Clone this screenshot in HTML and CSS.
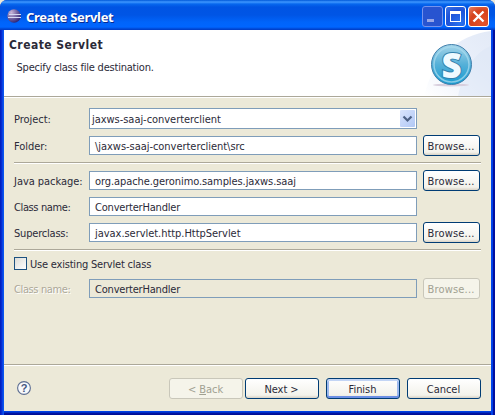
FILE: index.html
```html
<!DOCTYPE html>
<html lang="en">
<head>
<meta charset="utf-8">
<title>Create Servlet</title>
<link rel="stylesheet" href="styles.css">
</head>
<body>
<div class="window">
  <div class="titlebar">
    <svg class="app-icon" width="14" height="14" viewBox="0 0 14 14">
      <defs><radialGradient id="orb" cx=".3" cy=".25" r=".8"><stop offset="0" stop-color="#c9b8da"/><stop offset=".45" stop-color="#8272aa"/><stop offset="1" stop-color="#2e2475"/></radialGradient></defs>
      <circle cx="7" cy="7" r="6.7" fill="url(#orb)"/>
      <path d="M2 5.500h12M1 8.500h13" stroke="#d5d9f4"/>
    </svg>
    <h1 class="title">Create Servlet</h1>
    <div class="controls">
      <span class="control minimize"><svg width="19" height="19"><path d="M4 12h7v3H4z" fill="#97a6e7"/></svg></span>
      <span class="control"><svg width="19" height="19"><path d="M4 4h11v11H4z M5 7v7h9V7z" fill="#fff" fill-rule="evenodd"/></svg></span>
      <span class="control close"><svg width="19" height="19"><path d="M4.500 4.500l10 10M14.500 4.500l-10 10" stroke="#fff" stroke-width="2.300"/></svg></span>
    </div>
  </div>
  <div class="header">
    <div class="heading">
      <h2>Create Servlet</h2>
      <p>Specify class file destination.</p>
    </div>
    <svg class="banner" width="67" height="66" viewBox="424 30 67 66">
      <defs>
        <linearGradient id="disc" x1="0" y1="0" x2="0" y2="1"><stop offset="0" stop-color="#a5d5e9"/><stop offset=".5" stop-color="#55b0d8"/><stop offset="1" stop-color="#169bd0"/></linearGradient>
        <linearGradient id="haze" x1="0" y1="1" x2="1" y2="0"><stop offset="0" stop-color="#fff"/><stop offset=".6" stop-color="#e9effa"/><stop offset="1" stop-color="#e3eaf7"/></linearGradient>
      </defs>
      <path d="M424 96C433 60 456 35 491 31V96z" fill="url(#haze)"/>
      <path d="M458 96C464 70 474 53 491 46V96z" fill="#dce5f5" opacity=".5"/>
      <ellipse cx="451" cy="85" rx="18" ry="1.500" fill="#d8cfdd"/>
      <circle cx="451.500" cy="64.500" r="20" fill="url(#disc)" stroke="#407fac"/>
      <circle cx="451.500" cy="64.500" r="17.500" fill="none" stroke="#a8daee" stroke-width="1.500" opacity=".75"/>
      <text class="emblem" x="451.500" y="77.500" text-anchor="middle">S</text>
    </svg>
  </div>
  <div class="form">
    <div class="row"><label>Project:</label><div class="field combo"><span class="value">jaxws-saaj-converterclient</span><span class="arrow"><svg width="15" height="17"><path d="M3.500 6.500l4 4 4-4" fill="none" stroke="#4d6185" stroke-width="2.200"/></svg></span></div></div>
    <div class="row"><label>Folder:</label><div class="field"><span class="value">\jaxws-saaj-converterclient\src</span></div><span class="button browse">Browse...</span></div>
    <div class="rule"></div>
    <div class="row"><label>Java package:</label><div class="field"><span class="value package">org.apache.geronimo.samples.jaxws.saaj</span></div><span class="button browse">Browse...</span></div>
    <div class="row short"><label class="tight">Class name:</label><div class="field"><span class="value handler">ConverterHandler</span></div></div>
    <div class="row"><label class="superclass">Superclass:</label><div class="field"><span class="value">javax.servlet.http.HttpServlet</span></div><span class="button browse">Browse...</span></div>
    <div class="rule"></div>
    <div class="check"><span class="box"></span><span class="check-text">Use existing Servlet class</span></div>
    <div class="row off"><label class="tight">Class name:</label><div class="field"><span class="value handler">ConverterHandler</span></div><span class="button browse disabled">Browse...</span></div>
  </div>
  <div class="footer">
    <svg class="help" width="14" height="14" viewBox="0 0 14 14"><circle cx="7" cy="7" r="6.400" fill="#f8f9fb" stroke="#5c6d91" stroke-width="1.100"/><text class="mark" x="7" y="11" text-anchor="middle">?</text></svg>
    <span class="button wide disabled">&lt; <u>B</u>ack</span>
    <span class="button wide next">Next &gt;</span>
    <span class="button wide default">Finish</span>
    <span class="button wide">Cancel</span>
  </div>
</div>
</body>
</html>
```
FILE: styles.css
```css
* { box-sizing: border-box; }
body { margin: 0; background: #ece9d8; font: 11px/13px "DejaVu Sans Condensed", "DejaVu Sans", sans-serif; font-stretch: condensed; letter-spacing: -.04px; color: #2b2a38; }
svg { display: block; }
.window {
  width: 495px; height: 415px; padding: 0 4px 4px; overflow: hidden;
  border-radius: 7px 7px 0 0;
  background: linear-gradient(90deg, #001bb8 0, #0831d9 2px, #0a55ee 3px, #0a55ee 4px, transparent 4px, transparent 491px, #0048f1 491px, #003de0 493px, #000fa0 493px), linear-gradient(#003be0 411px, #0046e8 412px, #0016a5 413px, #000c90 415px);
}
.titlebar {
  height: 30px; margin: 0 -4px; padding: 0 6px 0 7px; display: flex; align-items: center;
  background: linear-gradient(#0058d8 0, #3f97ff 2px, #0768ee 4px, #0054e3 7px, #0055e5 15px, #0064fa 22px, #0066ff 27px, #0046d2 29px, #003bc5 30px);
}
.app-icon { margin-top: 2px; }
.title { flex: 1; margin: 3px 0 0 5px; font: bold 13px/18px "Noto Sans", "Open Sans", sans-serif; letter-spacing: -.3px; color: #fff; text-shadow: 1px 1px #062a91; }
.controls { display: flex; gap: 2px; padding-top: 3px; }
.control { width: 21px; height: 21px; border: 1px solid #fff; border-radius: 3px; background: radial-gradient(circle at 75% 85%, #2a72ef, #1e52d8 60%, #3f75e5); }
.minimize { border-color: #7593ed; background: #2854d0; }
.close { background: radial-gradient(circle at 75% 85%, #e4532c, #d6421c 60%, #e58267); }
.header { height: 68px; background: linear-gradient(#fff 66px, #aca899 66px, #aca899 67px, #fff 67px); display: flex; justify-content: space-between; }
.heading { padding: 8px 0 0 5px; }
h2 { margin: 0; font-size: 12px; line-height: 14px; font-weight: bold; letter-spacing: .45px; }
p { margin: 9px 0 0 7.5px; letter-spacing: -.21px; }
.emblem { font: 800 35px "Open Sans", "Noto Sans", sans-serif; fill: #effaff; stroke: #3381ad; stroke-width: 2px; paint-order: stroke; }
.form { height: 266px; padding: 10px 10px 0; background: #ece9d8; display: flex; flex-direction: column; gap: 6px; }
.row { height: 21px; display: flex; align-items: center; flex: none; }
.short { height: 19px; }
label { width: 75px; flex: none; padding-top: 2px; }
.tight { letter-spacing: -.38px; }
.superclass { letter-spacing: -.2px; }
.field { width: 328px; height: 19px; margin-right: 6px; padding-left: 5px; display: flex; align-items: center; border: 1px solid #7f9db9; background: #fff; }
.value { padding-top: 2px; white-space: pre; }
.package { letter-spacing: -.08px; }
.handler { letter-spacing: -.2px; }
.combo { height: 21px; padding-left: 2px; justify-content: space-between; }
.arrow { width: 15px; height: 17px; margin-right: 1px; border-radius: 1px; background: linear-gradient(135deg, #d9e4fc, #b1c8f5); }
.button { width: 57px; height: 21px; border: 1px solid #003c74; border-radius: 3px; background: linear-gradient(#fff, #f3f2eb 85%, #d8d2c5); text-align: center; line-height: 21px; white-space: nowrap; }
.browse { padding-right: 1px; letter-spacing: .18px; }
.wide { width: 74px; margin-left: 7px; padding-right: 1px; }
.next { margin-left: 2px; }
.default { box-shadow: inset 0 2px #c3d5f5, inset 0 -2px #6c8fe4, inset 2px 0 #9db9ee, inset -2px 0 #9db9ee; }
.disabled { color: #a1a192; border-color: #c9c7ba; background: #f5f4ea; }
.rule { height: 2px; flex: none; background: #fff; border-top: 1px solid #aca899; }
.check { height: 15px; flex: none; display: flex; }
.check-text { padding-top: 1px; letter-spacing: -.2px; }
.box { width: 13px; height: 13px; margin-right: 3px; border: 1px solid #1c5180; background: linear-gradient(135deg, #dcdcd7, #fff); }
.off label { color: #aca899; text-shadow: 1px 1px #fff; }
.off .field { background: #ece9d8; }
.footer { height: 47px; padding: 0 10px 0 13px; display: flex; align-items: center; background: #ece9d8; border-top: 1px solid #aca899; box-shadow: inset 0 1px #fff; }
.help { margin-right: auto; }
.mark { font: bold 11px "Liberation Sans", sans-serif; fill: #44577f; }
```
